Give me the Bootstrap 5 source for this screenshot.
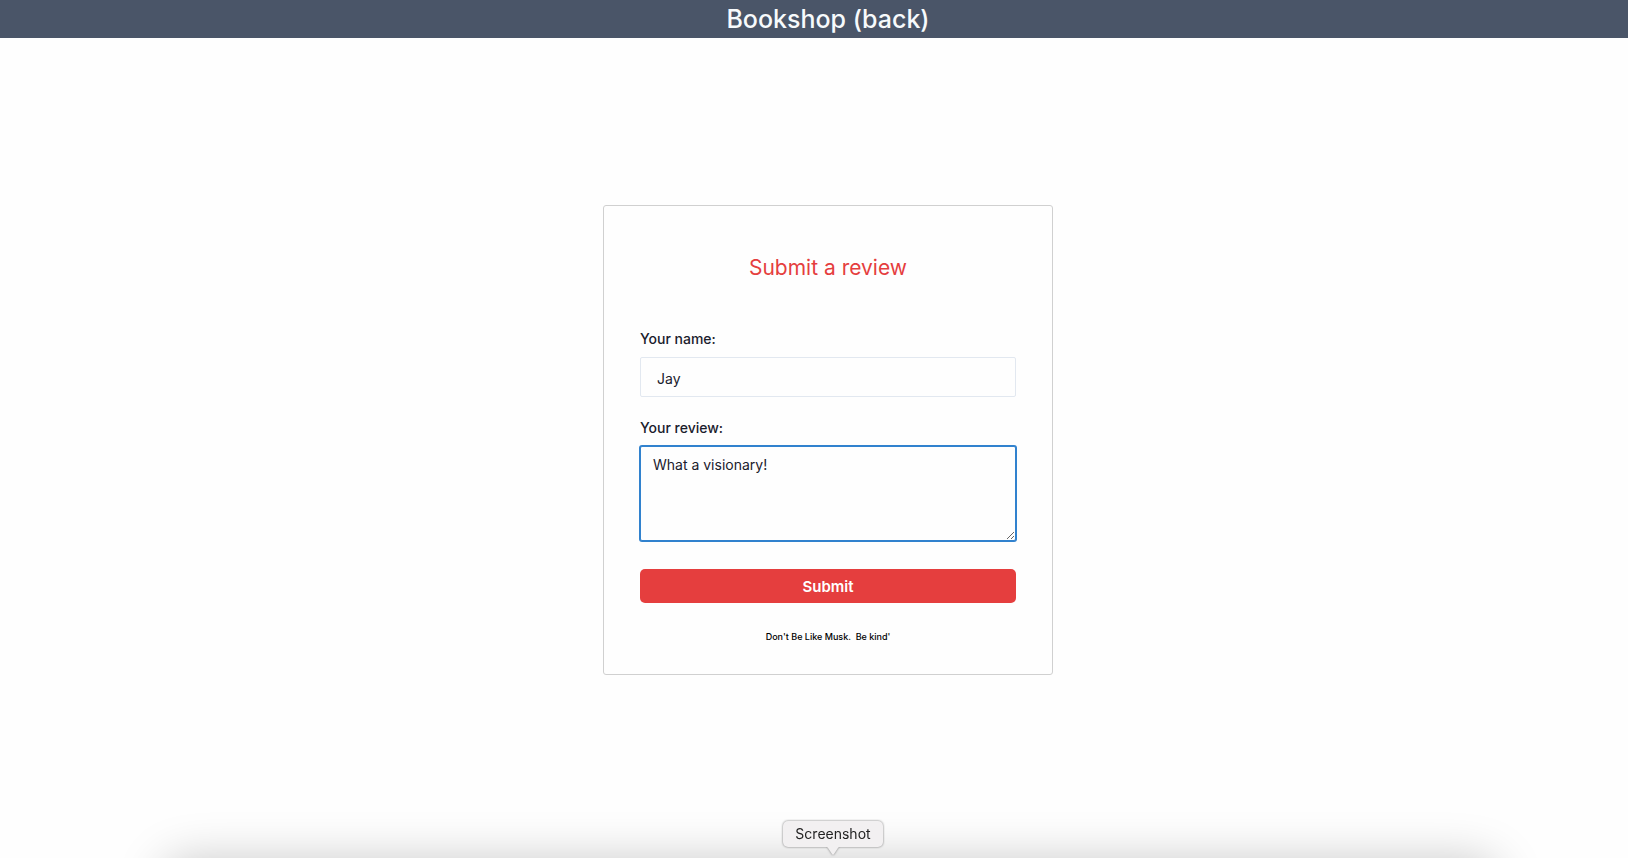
<!DOCTYPE html>
<html lang="en">
<head>
<meta charset="utf-8">
<meta name="viewport" content="width=device-width, initial-scale=1">
<title>Bookshop</title>
<link href="https://cdn.jsdelivr.net/npm/bootstrap@5.3.0/dist/css/bootstrap.min.css" rel="stylesheet">
<style>
body { font-family: Inter, "Liberation Sans", sans-serif; font-size: 14px; color: #1a202c; background: #fefefe; }
.shop-header, main { padding-left: 28px; }
.shop-header { background: #4a5568; height: 38px; }
.shop-header a { font-size: 25px; line-height: 38px; font-weight: 500; color: #f7fafc; }
.review-card { width: 450px; max-width: 100%; padding: 46px 36px 31px; border: 1px solid #d0d0d0; border-radius: 3px; background: #fefefe; }
.review-title { font-size: 21px; line-height: 32px; color: #e53e3e; margin-bottom: 45px; }
.field { margin-bottom: 21px; }
.form-label { font-weight: 500; line-height: 20px; margin-bottom: 8px; }
.form-control { font-size: 14px; line-height: 20px; color: #1a202c; background: #fefefe; border-color: #e2e8f0; border-radius: 2px; }
input.form-control { height: 40px; padding: 2px 16px 0; }
textarea.form-control { height: 95px; padding: 8px 12px; resize: vertical; }
.form-control:focus { color: #1a202c; background: #fefefe; border-color: #3182ce; box-shadow: 0 0 0 1px #3182ce; }
.btn-submit, .btn-submit:hover { background: #e53e3e; color: #fff; font-size: 15px; font-weight: 600; height: 34px; padding: 2px 0 0; margin-top: 28px; border: 0; border-radius: 5px; }
.kind-note { font-size: 9px; line-height: 12px; font-weight: 500; color: #000; white-space: pre-wrap; margin: 28px 0 0; }
.dock-shade { left: 10%; right: 8%; bottom: -100px; height: 98px; border-radius: 24px; box-shadow: 0 0 48px rgba(0,0,0,.22); pointer-events: none; }
.dock-tip { bottom: 11px; left: calc(50% + 19px); transform: translateX(-50%); width: 100px; height: 26px; line-height: 26px; border-radius: 5px; background: #f2f0f1; color: #222; filter: drop-shadow(0 0 1px rgba(0,0,0,.5)); }
.dock-tip svg { top: 25px; left: 41px; }
</style>
</head>
<body class="min-vh-100 d-flex flex-column">
<header class="shop-header text-center"><a href="#" class="text-decoration-none">Bookshop (back)</a></header>
<main class="flex-grow-1 d-flex align-items-center justify-content-center pb-3">
  <form class="review-card">
    <h1 class="review-title text-center fw-normal">Submit a review</h1>
    <div class="field">
      <label class="form-label d-block" for="name">Your name:</label>
      <input class="form-control" id="name" type="text" value="Jay">
    </div>
    <div>
      <label class="form-label d-block" for="review">Your review:</label>
      <textarea class="form-control" id="review">What a visionary!</textarea>
    </div>
    <button class="btn btn-submit w-100 d-block" type="submit">Submit</button>
    <p class="kind-note text-center">Don't Be Like Musk.  Be kind'</p>
  </form>
</main>
<div class="dock-shade position-fixed"></div>
<div class="dock-tip position-fixed text-center">Screenshot<svg class="position-absolute" width="18" height="10" viewBox="0 0 18 10"><path d="M0 0H18Q15 0 14 2L10 8Q9 9.500 8 8L4 2Q3 0 0 0Z" fill="#f2f0f1"/></svg></div>
<script src="https://cdn.jsdelivr.net/npm/bootstrap@5.3.0/dist/js/bootstrap.bundle.min.js"></script>
<script>
const review = document.getElementById('review');
review.focus();
</script>
</body>
</html>
